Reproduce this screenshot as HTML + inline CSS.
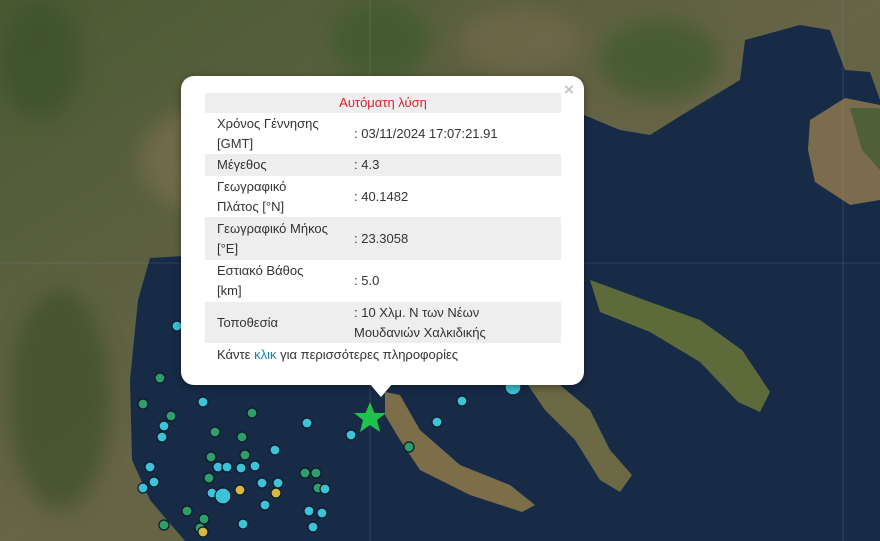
<!DOCTYPE html>
<html><head><meta charset="utf-8"><style>
html,body{margin:0;padding:0;width:880px;height:541px;overflow:hidden;background:#172b47;font-family:"Liberation Sans","DejaVu Sans",sans-serif;}
#map{position:absolute;left:0;top:0}
.pop{position:absolute;left:181px;top:76px;width:403px;height:309px;background:#fff;border-radius:13px;box-shadow:0 2px 8px rgba(0,0,0,.4)}
.tip{position:absolute;left:369px;top:383px;width:0;height:0;border-left:12px solid transparent;border-right:12px solid transparent;border-top:14px solid #fff}
.x{position:absolute;left:564px;top:80px;color:#c3c3c3;font-size:17px;font-weight:bold}
table{position:absolute;left:205px;top:93px;width:356px;border-collapse:collapse;font-size:13px;color:#333;line-height:20px}
td{padding:0 0 0 12px;vertical-align:middle}
tr.g td{background:#eeeeee}
td.v{padding-left:0;width:207px}
.hd td{text-align:center;color:#d8232a;height:20px}
.ft{position:absolute;left:217px;top:347px;font-size:13px;color:#333}
.ft span{color:#1a84a8}
</style></head><body>
<svg id="map" width="880" height="541" viewBox="0 0 880 541">
<defs>
<linearGradient id="land" x1="0" y1="0" x2="1" y2="1"><stop offset="0" stop-color="#4a5a33"/><stop offset=".5" stop-color="#676447"/><stop offset="1" stop-color="#5a6038"/></linearGradient>
<filter id="b"><feGaussianBlur stdDeviation="10"/></filter>
</defs>
<rect width="880" height="541" fill="#172b47"/>
<path d="M0,0H880V100L870,72L845,70L830,30L800,25L745,40L740,80L690,110L650,135L620,130L584,115L584,200L520,230L470,250L420,262L300,262L200,255L150,258L138,300L130,380L132,460L150,500L185,541H0Z" fill="url(#land)"/>
<g filter="url(#b)" opacity=".7">
<ellipse cx="40" cy="60" rx="40" ry="60" fill="#3b5129"/>
<ellipse cx="60" cy="400" rx="50" ry="110" fill="#3d5029"/>
<ellipse cx="380" cy="40" rx="50" ry="40" fill="#3d5a2c"/>
<ellipse cx="660" cy="60" rx="60" ry="40" fill="#3d5a2c"/>
<ellipse cx="200" cy="160" rx="60" ry="50" fill="#7a7050"/>
<ellipse cx="520" cy="40" rx="60" ry="30" fill="#75694b"/>
</g>
<path d="M810,120L845,98L880,105V200L850,205L815,182L808,150Z" fill="#7a6c4c"/>
<path d="M850,108L880,108V170L862,150Z" fill="#4e6035"/>
<path d="M385,392L400,395L420,430L460,465L510,485L535,505L522,512L470,495L420,470L400,440L385,415Z" fill="#7b6e48"/>
<path d="M528,385L560,385L590,410L610,450L632,475L620,492L600,480L575,440L545,410Z" fill="#6b6a44"/>
<path d="M590,280L612,288L650,302L700,320L742,350L770,392L760,412L738,402L700,362L650,332L600,312Z" fill="#5d6a3a"/>
<line x1="0" y1="263" x2="880" y2="263" stroke="#8aa0b8" stroke-width=".6" opacity=".35"/>
<line x1="370" y1="0" x2="370" y2="541" stroke="#8aa0b8" stroke-width=".6" opacity=".35"/>
<line x1="843" y1="0" x2="843" y2="541" stroke="#8aa0b8" stroke-width=".6" opacity=".35"/>
<g stroke="#0c1a28" stroke-width="1.2">
<g fill="#2f9e6a"><circle cx="160" cy="378" r="5"/><circle cx="143" cy="404" r="5"/><circle cx="171" cy="416" r="5"/><circle cx="215" cy="432" r="5"/><circle cx="242" cy="437" r="5"/><circle cx="211" cy="457" r="5"/><circle cx="209" cy="478" r="5"/><circle cx="245" cy="455" r="5"/><circle cx="305" cy="473" r="5"/><circle cx="316" cy="473" r="5"/><circle cx="318" cy="488" r="5"/><circle cx="187" cy="511" r="5"/><circle cx="204" cy="519" r="5"/><circle cx="164" cy="525" r="5"/><circle cx="252" cy="413" r="5"/><circle cx="409" cy="447" r="5"/><circle cx="200" cy="528" r="5"/></g>
<g fill="#3cc3d8"><circle cx="177" cy="326" r="5"/><circle cx="203" cy="402" r="5"/><circle cx="164" cy="426" r="5"/><circle cx="162" cy="437" r="5"/><circle cx="275" cy="450" r="5"/><circle cx="150" cy="467" r="5"/><circle cx="154" cy="482" r="5"/><circle cx="143" cy="488" r="5"/><circle cx="218" cy="467" r="5"/><circle cx="227" cy="467" r="5"/><circle cx="241" cy="468" r="5"/><circle cx="255" cy="466" r="5"/><circle cx="262" cy="483" r="5"/><circle cx="212" cy="493" r="5"/><circle cx="223" cy="496" r="8"/><circle cx="278" cy="483" r="5"/><circle cx="265" cy="505" r="5"/><circle cx="243" cy="524" r="5"/><circle cx="325" cy="489" r="5"/><circle cx="309" cy="511" r="5"/><circle cx="313" cy="527" r="5"/><circle cx="322" cy="513" r="5"/><circle cx="307" cy="423" r="5"/><circle cx="351" cy="435" r="5"/><circle cx="437" cy="422" r="5"/><circle cx="462" cy="401" r="5"/><circle cx="513" cy="387" r="8"/></g>
<g fill="#d8b840"><circle cx="240" cy="490" r="5"/><circle cx="276" cy="493" r="5"/><circle cx="203" cy="532" r="5"/></g>
</g>
<polygon points="370,402 374.5,413 386,413 377,420 380,432 370,425 360,432 363,420 354,413 365.5,413" fill="#1fc24a"/>
</svg>
<div class="pop"></div>
<div class="tip"></div>
<div class="x">×</div>
<table>
<tr class="g hd"><td colspan="2" style="padding:0">Αυτόματη λύση</td></tr>
<tr style="height:41px"><td>Χρόνος Γέννησης<br>[GMT]</td><td class="v">: 03/11/2024 17:07:21.91</td></tr>
<tr class="g" style="height:22px"><td>Μέγεθος</td><td class="v">: 4.3</td></tr>
<tr style="height:41px"><td>Γεωγραφικό<br>Πλάτος [°N]</td><td class="v">: 40.1482</td></tr>
<tr class="g" style="height:43px"><td>Γεωγραφικό Μήκος<br>[°E]</td><td class="v">: 23.3058</td></tr>
<tr style="height:42px"><td>Εστιακό Βάθος<br>[km]</td><td class="v">: 5.0</td></tr>
<tr class="g" style="height:41px"><td>Τοποθεσία</td><td class="v">: 10 Χλμ. N των Νέων<br>Μουδανιών Χαλκιδικής</td></tr>
</table>
<div class="ft">Κάντε <span>κλικ</span> για περισσότερες πληροφορίες</div>
</body></html>
